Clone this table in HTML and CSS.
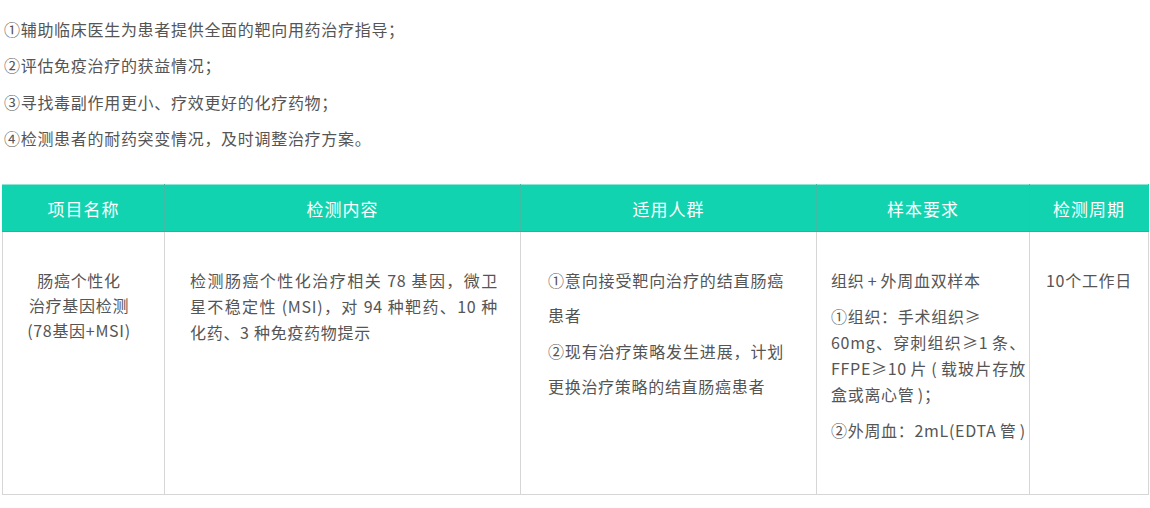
FILE: index.html
```html
<!DOCTYPE html>
<html lang="zh-CN">
<head>
<meta charset="utf-8">
<title>肠癌个性化治疗基因检测</title>
<link rel="stylesheet" href="styles.css">
</head>
<body>
<div class="page">
  <div class="intro">
    <p>①辅助临床医生为患者提供全面的靶向用药治疗指导；</p>
    <p>②评估免疫治疗的获益情况；</p>
    <p>③寻找毒副作用更小、疗效更好的化疗药物；</p>
    <p>④检测患者的耐药突变情况，及时调整治疗方案。</p>
  </div>
  <table class="spec">
    <colgroup>
      <col class="c1"><col class="c2"><col class="c3"><col class="c4"><col class="c5">
    </colgroup>
    <thead>
      <tr>
        <th>项目名称</th>
        <th>检测内容</th>
        <th>适用人群</th>
        <th>样本要求</th>
        <th>检测周期</th>
      </tr>
    </thead>
    <tbody>
      <tr>
        <td class="name">肠癌个性化<br>治疗基因检测<br>(78基因+MSI)</td>
        <td class="content">检测肠癌个性化治疗相关 78 基因，微卫星不稳定性 (MSI)，对 94 种靶药、10 种化药、3 种免疫药物提示</td>
        <td class="people">
          <p>①意向接受靶向治疗的结直肠癌患者</p>
          <p>②现有治疗策略发生进展，计划更换治疗策略的结直肠癌患者</p>
        </td>
        <td class="sample">
          <p>组织 + 外周血双样本</p>
          <p>①组织：手术组织≥<br>60mg、穿刺组织≥1 条、FFPE≥10 片 ( 载玻片存放盒或离心管 )；</p>
          <p>②外周血：2mL(EDTA 管 )</p>
        </td>
        <td class="period">10个工作日</td>
      </tr>
    </tbody>
  </table>
</div>
</body>
</html>
```

FILE: styles.css
```css
html, body {
  margin: 0;
  padding: 0;
  background: #ffffff;
}

body {
  font-family: "Noto Sans CJK SC", "Noto Sans", sans-serif;
  color: #555555;
}

.page {
  padding: 11px 0 0 2px;
}

.intro {
  padding-left: 2px;
}

.intro p {
  margin: 0;
  font-size: 16px;
  line-height: 36.3px;
  letter-spacing: 0.7px;
}

.spec {
  margin-top: 28px;
  width: 1146px;
  border-collapse: collapse;
  table-layout: fixed;
}

.c1 { width: 162px; }
.c2 { width: 356px; }
.c3 { width: 296px; }
.c4 { width: 213px; }
.c5 { width: 119px; }

.spec th {
  height: 46px;
  padding: 0;
  background: #12d3b0;
  color: #ffffff;
  font-weight: 400;
  font-size: 17px;
  letter-spacing: 1px;
  text-align: center;
  border-top: 1px solid #8ee5d4;
  border-bottom: 1px solid #0fbf9f;
  border-left: 1px solid #3fbca5;
  border-right: 1px solid #3fbca5;
}

.spec th:first-child { border-left-color: #12d3b0; }
.spec th:last-child { border-right-color: #12d3b0; }

.spec td {
  height: 263px;
  vertical-align: top;
  border: 1px solid #d6d6d6;
  border-top: none;
  font-size: 16px;
  letter-spacing: 0.7px;
  box-sizing: border-box;
}

.spec td p { margin: 0; }

.name {
  text-align: center;
  line-height: 25px;
  padding: 36px 9px 0 0;
}

.content {
  text-align: justify;
  line-height: 26px;
  padding: 35px 22px 0 25px;
}

.people {
  text-align: justify;
  line-height: 35.3px;
  padding: 31px 32px 0 27px;
}

.sample {
  text-align: justify;
  line-height: 26px;
  letter-spacing: -0.3px;
  word-spacing: -1px;
  padding: 35px 3px 0 14px;
}

.sample p + p { margin-top: 10px; }

.period {
  text-align: center;
  padding: 35px 0 0 0;
  line-height: 26px;
  letter-spacing: 0;
}
```
